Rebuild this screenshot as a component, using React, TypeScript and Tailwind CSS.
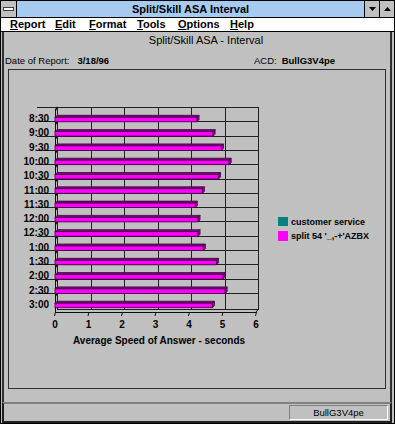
import React from 'react';

// Split/Skill ASA report window (CentreVu style, Win 3.1 chrome)

const TIMES = ['8:30', '9:00', '9:30', '10:00', '10:30', '11:00', '11:30', '12:00', '12:30', '1:00', '1:30', '2:00', '2:30', '3:00'];
const ASA = [4.24, 4.72, 4.97, 5.2, 4.88, 4.4, 4.19, 4.27, 4.27, 4.43, 4.82, 5.02, 5.08, 4.7];

// chart geometry, in page pixels
const X0 = 55;
const UNIT = 33.5;
const TOP = 108;
const BAND = 14.3;
const FLOOR = 313;
const WALL_BOTTOM = 310;

const MENU = [
  { label: 'Report', w: 'w-[45px]' },
  { label: 'Edit', w: 'w-[34px]' },
  { label: 'Format', w: 'w-[48px]' },
  { label: 'Tools', w: 'w-[41px]' },
  { label: 'Options', w: 'w-[52px]' },
  { label: 'Help', w: 'w-[40px]' },
];

function AsaChart() {
  const ticks = [0, 1, 2, 3, 4, 5, 6];
  return (
    <svg width={376} height={318} viewBox="9 71 376 318" className="block" shapeRendering="crispEdges">
      {/* back wall + grid */}
      <rect x={57.5} y={108.5} width={201} height={WALL_BOTTOM - TOP} fill="none" stroke="#202020" />
      {[1, 2, 3, 4, 5].map((k) => (
        <line key={k} x1={57.5 + k * UNIT} y1={TOP} x2={57.5 + k * UNIT} y2={WALL_BOTTOM} stroke="#202020" />
      ))}
      {TIMES.map((_, i) => (
        <line key={i} x1={37} y1={TOP + i * BAND + 0.5} x2={258} y2={TOP + i * BAND + 0.5} stroke="#202020" />
      ))}

      {/* left axis */}
      <line x1={55.5} y1={TOP + 2} x2={55.5} y2={FLOOR} stroke="#101010" />
      {TIMES.map((_, i) => (
        <line key={i} x1={55.5} y1={TOP + i * BAND + 3} x2={57.5} y2={TOP + i * BAND} stroke="#101010" strokeWidth={1.5} shapeRendering="auto" />
      ))}

      {/* floor */}
      <line x1={55} y1={FLOOR + 0.5} x2={256} y2={FLOOR + 0.5} stroke="#101010" />
      <line x1={256} y1={FLOOR} x2={258.5} y2={WALL_BOTTOM} stroke="#101010" shapeRendering="auto" />
      {ticks.map((t) => (
        <line key={t} x1={X0 + t * UNIT + 0.5} y1={FLOOR} x2={X0 + t * UNIT - 0.5} y2={FLOOR + 4} stroke="#101010" shapeRendering="auto" />
      ))}

      {/* bars */}
      {ASA.map((v, i) => {
        const y = TOP + i * BAND + 8.3;
        const x = X0 + v * UNIT;
        return (
          <g key={i} shapeRendering="auto">
            <polygon points={`${X0},${y + 2} ${X0 + 2},${y} ${x + 2},${y} ${x},${y + 2}`} fill="#800080" stroke="#400040" strokeWidth={0.8} />
            <rect x={X0} y={y + 2} width={x - X0} height={4.5} fill="#ff00ff" stroke="#400040" strokeWidth={0.8} />
            <polygon points={`${x},${y + 2} ${x + 2},${y} ${x + 2},${y + 4.5} ${x},${y + 6.5}`} fill="#a000a0" stroke="#400040" strokeWidth={0.8} />
          </g>
        );
      })}

      {/* category labels */}
      {TIMES.map((t, i) => (
        <text key={t} x={49} y={TOP + i * BAND + 15} textAnchor="end" fontSize={10} fontWeight="bold" fill="#000">
          {t}
        </text>
      ))}

      {/* value labels */}
      {ticks.map((t) => (
        <text key={t} x={X0 + t * UNIT} y={329} textAnchor="middle" fontSize={10} fontWeight="bold" fill="#000">
          {t}
        </text>
      ))}
      <text x={73} y={345} fontSize={10} fontWeight="bold" fill="#000">
        Average Speed of Answer - seconds
      </text>

      {/* legend */}
      <rect x={278} y={218} width={10} height={9} fill="#008080" />
      <text x={291} y={226} fontSize={9} fontWeight="bold" fill="#000">
        customer service
      </text>
      <rect x={278} y={232} width={10} height={10} fill="#ff00ff" />
      <text x={291} y={240} fontSize={9} fontWeight="bold" fill="#000">
        split 54 '_,-+'AZBX
      </text>
    </svg>
  );
}

function TitleButton({ up }: { up?: boolean }) {
  return (
    <div className="w-[15px] h-full bg-[#c0c0c0] border-l border-black flex items-center justify-center">
      <svg width={7} height={4} viewBox="0 0 7 4">
        {up ? <polygon points="0,4 7,4 3.5,0" fill="#000" /> : <polygon points="0,0 7,0 3.5,4" fill="#000" />}
      </svg>
    </div>
  );
}

export default function App() {
  return (
    <div className="w-[395px] h-[424px] bg-[#c0c0c0] border border-black flex flex-col font-['Liberation_Sans',Arial,sans-serif] text-black overflow-hidden">
      {/* title bar */}
      <div className="h-[17px] border-b border-black bg-[#a6caf0] flex items-stretch shrink-0">
        <div className="w-[16px] bg-[#c0c0c0] border-r border-black flex items-center justify-center">
          <div className="w-[11px] h-[4px] bg-white border border-[#404040]" />
        </div>
        <div className="flex-1 text-center text-[11px] font-bold leading-[16px]">Split/Skill ASA Interval</div>
        <TitleButton />
        <TitleButton up />
      </div>

      {/* menu bar */}
      <div className="h-[14px] border-b border-black bg-white flex items-center pl-[9px] text-[11px] font-bold leading-[13px] shrink-0">
        {MENU.map((m) => (
          <span key={m.label} className={m.w}>
            <span className="underline underline-offset-1">{m.label[0]}</span>
            {m.label.slice(1)}
          </span>
        ))}
      </div>

      {/* report body */}
      <div className="flex-1 ml-[1px] mr-[2px] border-x-2 border-[#303030] flex flex-col">
        <div className="mt-[1px] pl-[18px] text-center text-[11px] leading-[14px]">Split/Skill ASA - Interval</div>
        <div className="mt-[8px] flex text-[9.5px] leading-[12px] pl-[1px]">
          <div className="w-[249px] flex">
            <span>Date of Report:</span>
            <span className="ml-[8px] font-bold">3/18/96</span>
          </div>
          <span>ACD:</span>
          <span className="ml-[5px] font-bold">BullG3V4pe</span>
        </div>
        <div className="mt-[2px] ml-[4px] mr-[4px] h-[320px] border border-[#303030]">
          <AsaChart />
        </div>
      </div>

      {/* status bar */}
      <div className="h-[21px] ml-[1px] mr-[2px] border-t-2 border-t-[#808080] border-x-2 border-x-[#202020] border-b-2 border-b-[#202020] flex justify-end items-center pr-[2px] shrink-0">
        <div className="w-[99px] h-[15px] border-t border-l border-[#808080] border-b-white border-r-white border-b border-r text-center text-[9.5px] leading-[13px]">
          BullG3V4pe
        </div>
      </div>
    </div>
  );
}
